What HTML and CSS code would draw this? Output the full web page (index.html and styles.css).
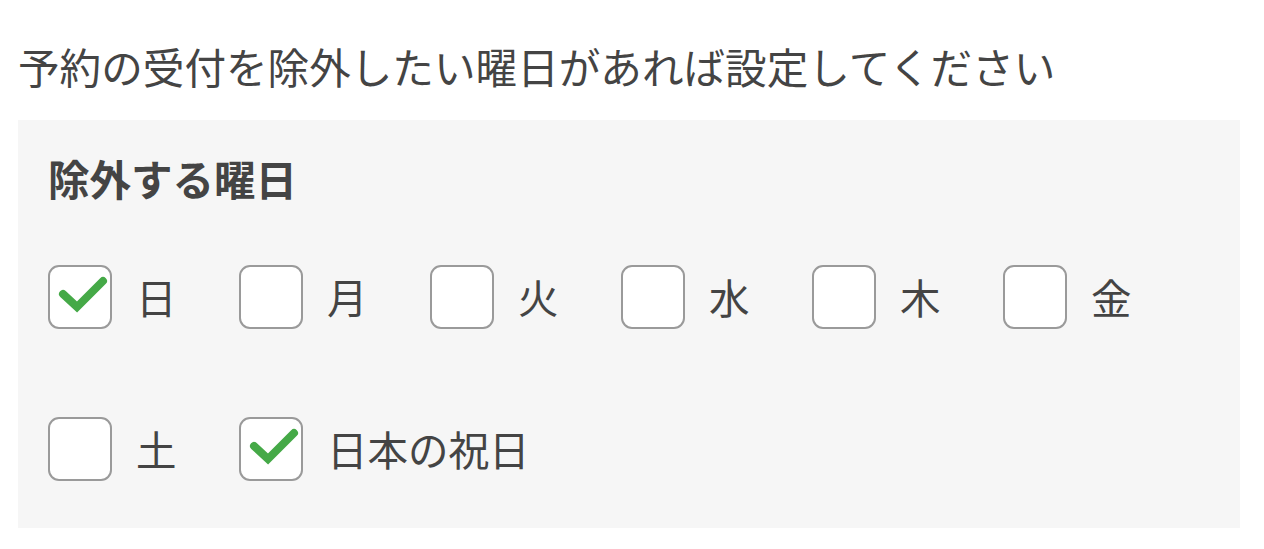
FILE: index.html
```html
<!DOCTYPE html>
<html lang="ja">
<head>
    <meta charset="utf-8">
    <title>除外する曜日</title>
    <link rel="stylesheet" href="styles.css">
</head>
<body>
    <div class="page">
        <p class="lead">予約の受付を除外したい曜日があれば設定してください</p>

        <div class="panel">
            <h2>除外する曜日</h2>

            <div class="days">
                <label class="day">
                    <span class="box checked">
                        <svg viewBox="0 0 60 60"><path d="M13 27 L27 40 L53 14"/></svg>
                    </span>
                    <span class="name">日</span>
                </label>
                <label class="day">
                    <span class="box"></span>
                    <span class="name">月</span>
                </label>
                <label class="day">
                    <span class="box"></span>
                    <span class="name">火</span>
                </label>
                <label class="day">
                    <span class="box"></span>
                    <span class="name">水</span>
                </label>
                <label class="day">
                    <span class="box"></span>
                    <span class="name">木</span>
                </label>
                <label class="day">
                    <span class="box"></span>
                    <span class="name">金</span>
                </label>
                <label class="day">
                    <span class="box"></span>
                    <span class="name">土</span>
                </label>
                <label class="day">
                    <span class="box checked">
                        <svg viewBox="0 0 60 60"><path d="M13 27 L27 40 L53 14"/></svg>
                    </span>
                    <span class="name">日本の祝日</span>
                </label>
            </div>
        </div>
    </div>
</body>
</html>
```

FILE: styles.css
```css
body {
    margin: 0;
    padding: 0;
    background-color: #fff;
    font-family: "Noto Sans CJK JP", "Noto Sans", sans-serif;
    color: #444;
}

.page {
    padding: 36px 24px 0 18px;
}

.lead {
    margin: 0 0 24px 0;
    font-size: 41.6px;
    line-height: 60px;
    white-space: nowrap;
}

.panel {
    background-color: #f6f6f6;
    padding: 28px 30px 47px 30px;
}

.panel h2 {
    margin: 0;
    font-size: 41.5px;
    font-weight: bold;
    line-height: 60px;
}

.days {
    display: grid;
    grid-template-columns: repeat(6, 191px);
    row-gap: 88px;
    margin-top: 57px;
}

.day {
    display: flex;
    align-items: center;
    gap: 24px;
    white-space: nowrap;
}

.box {
    width: 64px;
    height: 64px;
    box-sizing: border-box;
    border: 2px solid #9a9a9a;
    border-radius: 11px;
    background-color: #fff;
    flex-shrink: 0;
}

.box svg {
    display: block;
    width: 60px;
    height: 60px;
}

.box svg path {
    fill: none;
    stroke: #45a947;
    stroke-width: 8;
    stroke-linecap: round;
}

.name {
    font-size: 40.5px;
    line-height: 64px;
}
```
